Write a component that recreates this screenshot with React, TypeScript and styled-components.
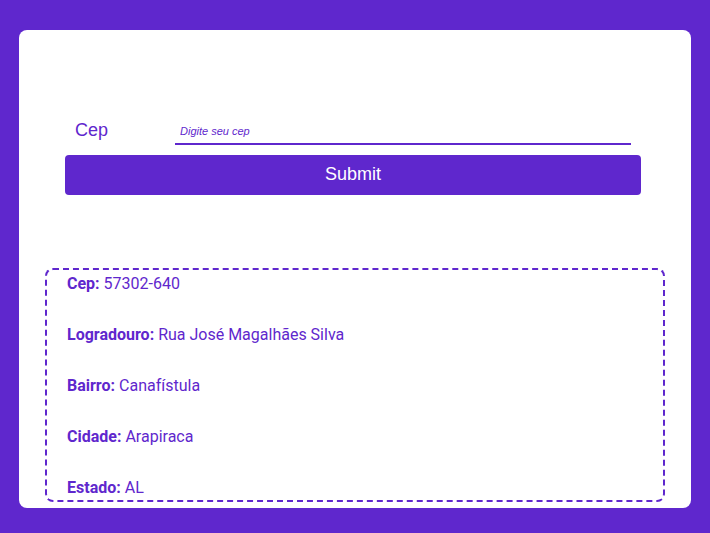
import React from "react";
import styled, { createGlobalStyle } from "styled-components";

const PURPLE = "#5f27cd";

const GlobalStyle = createGlobalStyle`
  html, body {
    margin: 0;
    padding: 0;
    background: ${PURPLE};
  }
  * { box-sizing: border-box; }
`;

const Page = styled.div`
  padding: 30px 19px 25px;
`;

const Card = styled.main`
  background: #ffffff;
  border-radius: 8px;
  height: 478px;
  padding: 88px 26px 0;
  display: flex;
  flex-direction: column;
`;

const Form = styled.form`
  display: flex;
  flex-direction: column;
  gap: 10px;
  margin: 0 24px 0 20px;
`;

const Row = styled.div`
  display: flex;
  align-items: center;
  height: 27px;
`;

const Label = styled.label`
  width: 110px;
  padding-left: 10px;
  margin-top: -2px;
  font-family: "Liberation Sans", Arial, sans-serif;
  font-size: 18px;
  color: ${PURPLE};
`;

const Input = styled.input`
  width: 456px;
  height: 27px;
  border: none;
  border-bottom: 2px solid ${PURPLE};
  outline: none;
  padding: 0 5px 0;
  font-family: "Liberation Sans", Arial, sans-serif;
  font-size: 11px;
  font-style: italic;
  color: ${PURPLE};
  background: transparent;
  &::placeholder {
    color: ${PURPLE};
    opacity: 1;
  }
`;

const Button = styled.button`
  height: 40px;
  width: 576px;
  border: none;
  border-radius: 4px;
  background: ${PURPLE};
  color: #ffffff;
  font-family: "Liberation Sans", Arial, sans-serif;
  font-size: 18px;
  padding: 0 0 2px;
  cursor: pointer;
`;

const Result = styled.section`
  margin-top: 73px;
  border: 2px dashed ${PURPLE};
  border-radius: 8px;
  padding: 4px 20px 5px;
  display: flex;
  flex-direction: column;
  gap: 32px;
  height: 234px;
`;

const Line = styled.p`
  margin: 0;
  font-family: Roboto, "Noto Sans", sans-serif;
  font-size: 16px;
  line-height: 19px;
  color: ${PURPLE};
  & strong {
    font-weight: 700;
  }
`;

const data: [string, string][] = [
  ["Cep", "57302-640"],
  ["Logradouro", "Rua José Magalhães Silva"],
  ["Bairro", "Canafístula"],
  ["Cidade", "Arapiraca"],
  ["Estado", "AL"],
];

export default function App() {
  return (
    <>
      <GlobalStyle />
      <Page>
        <Card>
          <Form onSubmit={(e) => e.preventDefault()}>
            <Row>
              <Label htmlFor="cep">Cep</Label>
              <Input id="cep" placeholder="Digite seu cep" />
            </Row>
            <Button type="submit">Submit</Button>
          </Form>
          <Result>
            {data.map(([k, v]) => (
              <Line key={k}>
                <strong>{k}:</strong> {v}
              </Line>
            ))}
          </Result>
        </Card>
      </Page>
    </>
  );
}
